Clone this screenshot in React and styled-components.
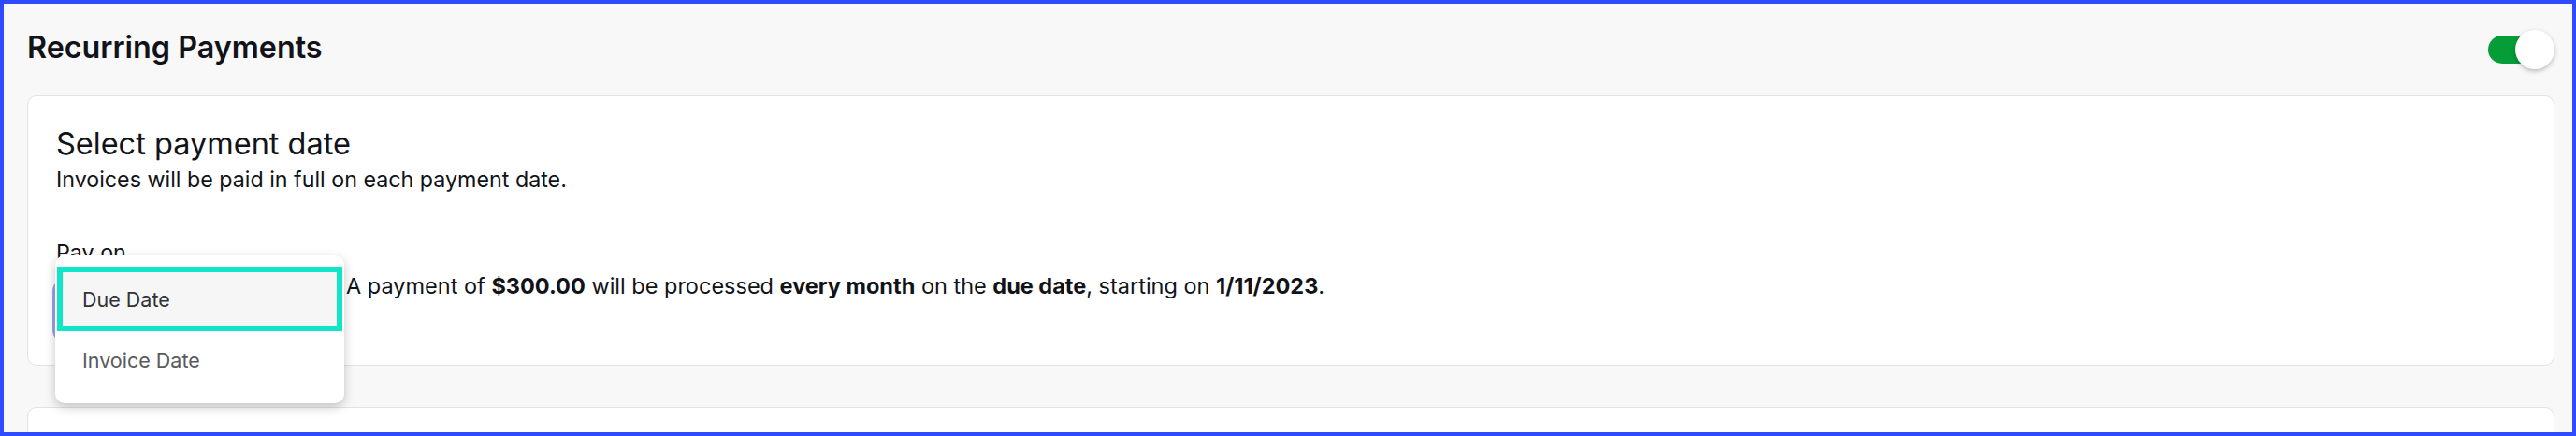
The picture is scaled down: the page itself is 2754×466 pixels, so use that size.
import React from 'react';
import styled, { createGlobalStyle } from 'styled-components';

const GlobalStyle = createGlobalStyle`
  html, body {
    margin: 0;
    padding: 0;
    font-family: Inter, "Noto Sans", sans-serif;
    color: #111318;
  }
  * { box-sizing: border-box; }
`;

export default function App() {
  return (
    <>
      <GlobalStyle />
      <Frame>
        <Header>
          <Title>Recurring Payments</Title>
          <Switch>
            <Track />
            <Knob />
          </Switch>
        </Header>
        <Card>
          <Heading>Select payment date</Heading>
          <Sub>Invoices will be paid in full on each payment date.</Sub>
          <Label>Pay on</Label>
          <Row>
            <Select />
            <Sentence>
              A payment of <b>$300.00</b> will be processed <b>every month</b> on the <b>due date</b>, starting on <b>1/11/2023</b>.
            </Sentence>
          </Row>
          <Menu>
            <Option active>Due Date</Option>
            <Option>Invoice Date</Option>
          </Menu>
        </Card>
        <EmptyCard />
      </Frame>
    </>
  );
}

const Frame = styled.div`
  height: 466px;
  border: 4px solid #2f4bff;
  background: #f8f8f8;
  padding: 0 19px 0 25px;
  overflow: hidden;
`;

const Header = styled.div`
  height: 98px;
  display: flex;
  align-items: center;
  justify-content: space-between;
`;

const Title = styled.h1`
  margin: 0 0 3px 0;
  font-size: 32.3px;
  line-height: 1;
  font-weight: 600;
  color: #111318;
`;

const Switch = styled.div`
  position: relative;
  width: 71px;
  height: 42px;
`;

const Track = styled.div`
  margin-top: 6px;
  width: 60px;
  height: 30px;
  border-radius: 15px;
  background: #069d39;
`;

const Knob = styled.div`
  position: absolute;
  top: 0;
  right: 0;
  width: 42px;
  height: 42px;
  border-radius: 50%;
  background: #fff;
  box-shadow: 0 2px 5px rgba(0, 0, 0, 0.25);
`;

const Card = styled.div`
  position: relative;
  height: 289px;
  background: #fff;
  border: 1px solid #e2e2e2;
  border-radius: 10px;
  padding: 35px 30px 0 30px;
`;

const Heading = styled.h2`
  margin: 0;
  font-size: 32.5px;
  line-height: 32px;
  font-weight: 400;
`;

const Sub = styled.p`
  margin: 7px 0 0 0;
  font-size: 23.25px;
  line-height: 30px;
`;

const Label = styled.div`
  margin-top: 48px;
  font-size: 23.25px;
  line-height: 30px;
`;

const Row = styled.div`
  margin-top: 6px;
  display: flex;
  align-items: flex-start;
  gap: 12px;
`;

const Select = styled.div`
  margin-top: 12px;
  width: 298px;
  height: 58px;
  border-radius: 8px;
  background: #fff;
  border: 1px solid #c9ccf4;
  box-shadow: 0 0 0 4px #9da3ec;
`;

const Sentence = styled.div`
  font-size: 23.5px;
  line-height: 30px;
  color: #111318;

  b {
    font-weight: 700;
  }
`;

const Menu = styled.div`
  position: absolute;
  left: 29px;
  top: 170px;
  width: 309px;
  height: 158px;
  padding: 12px 2px 0 2px;
  background: #fff;
  border-radius: 10px;
  box-shadow: 0 4px 12px rgba(0, 0, 0, 0.22);
`;

const Option = styled.div`
  display: flex;
  align-items: center;
  height: ${p => (p.active ? '69px' : '61px')};
  padding-left: ${p => (p.active ? '21px' : '27px')};
  font-size: 21.5px;
  color: ${p => (p.active ? '#333' : '#5a5a5f')};
  background: ${p => (p.active ? '#f6f6f6' : '#fff')};
  border: ${p => (p.active ? '6px solid #10e5c7' : 'none')};
`;

const EmptyCard = styled.div`
  margin-top: 44px;
  height: 100px;
  background: #fff;
  border: 1px solid #e2e2e2;
  border-radius: 10px;
`;
